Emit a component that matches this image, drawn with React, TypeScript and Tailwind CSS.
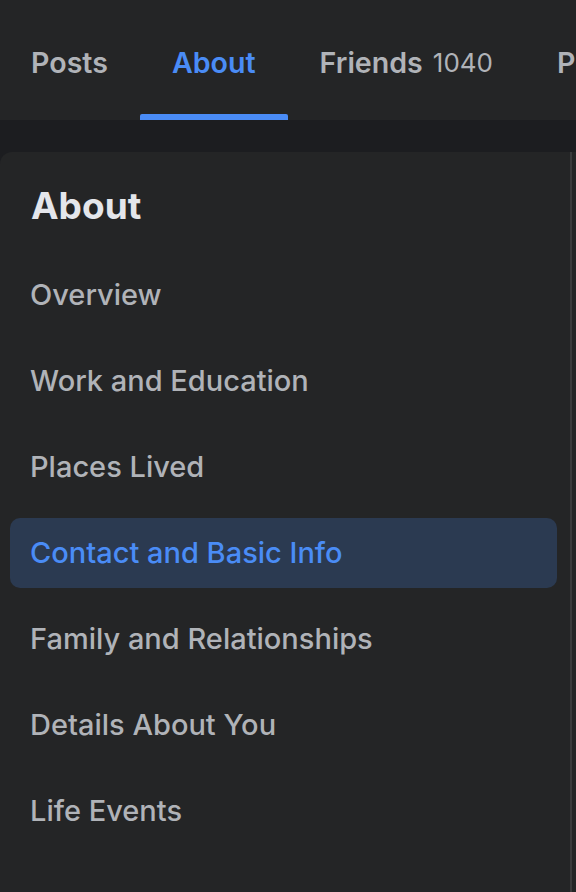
const tabs = [
  { label: "Posts", active: false },
  { label: "About", active: true },
  { label: "Friends", count: "1040", active: false },
  { label: "Photos", active: false },
];

const sections = [
  "Overview",
  "Work and Education",
  "Places Lived",
  "Contact and Basic Info",
  "Family and Relationships",
  "Details About You",
  "Life Events",
];

const selected = "Contact and Basic Info";

function ProfileTabs() {
  return (
    <div className="-ml-px flex h-[120px] overflow-hidden bg-[#242526]">
      {tabs.map((tab) => (
        <div className="flex h-full shrink-0 flex-col" key={tab.label}>
          <div className="flex flex-1 items-center px-8 pt-[12px]">
            <span
              className={`text-[28.6px] font-semibold leading-none ${
                tab.active ? "text-[#4a8cf6]" : "text-[#b0b3b8]"
              }`}
            >
              {tab.label}
            </span>
            {tab.count && (
              <span className="ml-[10px] text-[26px] font-normal leading-none text-[#b0b3b8]">
                {tab.count}
              </span>
            )}
          </div>
          <div className={`h-[6px] rounded-t-[2px] ${tab.active ? "bg-[#4a8cf6]" : ""}`} />
        </div>
      ))}
    </div>
  );
}

function AboutMenu() {
  return (
    <div className="flex flex-1 rounded-tl-[12px] bg-[#242526]">
      <div className="flex-1 pl-[10px] pr-[13px] pt-[30px]">
        <h2 className="pl-[21px] text-[37px] font-bold leading-[48px] text-[#e4e6eb]">About</h2>
        <div className="mt-[30px] flex flex-col gap-4">
          {sections.map((name) => {
            const isSelected = name === selected;
            return (
              <div
                className={`flex h-[70px] items-center rounded-[10px] pl-[20px] ${
                  isSelected ? "bg-[#2b3a51]" : ""
                }`}
                key={name}
              >
                <span
                  className={`text-[29px] font-medium ${
                    isSelected ? "text-[#4a8cf6]" : "text-[#b0b3b8]"
                  }`}
                >
                  {name}
                </span>
              </div>
            );
          })}
        </div>
      </div>
      <div className="mr-[4px] w-[2px] bg-[#3a3b3c]" />
    </div>
  );
}

export default function App() {
  return (
    <div
      className="flex h-[892px] w-[576px] flex-col overflow-hidden bg-[#1c1d20]"
      style={{ fontFamily: "Inter, 'Noto Sans', sans-serif" }}
    >
      <ProfileTabs />
      <div className="flex flex-1 pt-[32px]">
        <AboutMenu />
      </div>
    </div>
  );
}
